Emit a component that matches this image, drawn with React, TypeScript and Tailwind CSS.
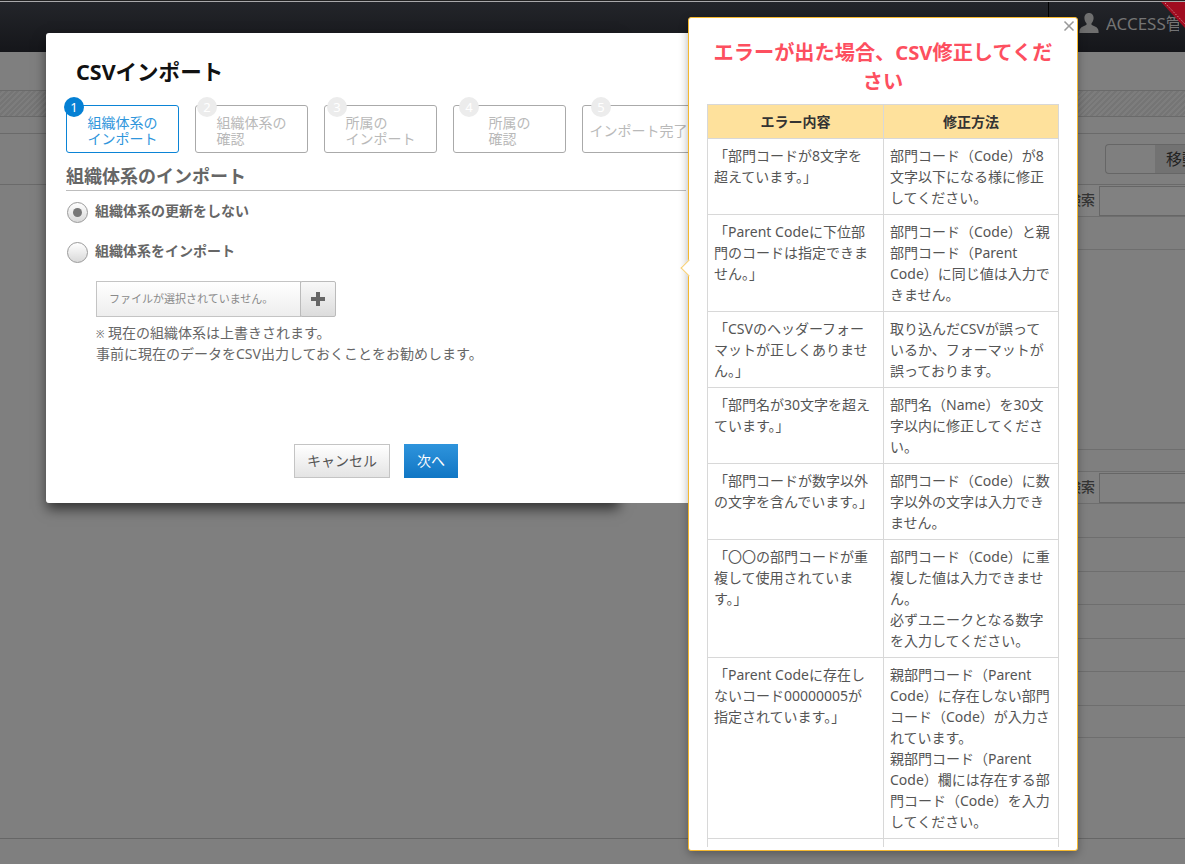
import { X } from "lucide-react";

const font = "font-['Noto_Sans','Noto_Sans_CJK_JP',sans-serif]";

const steps = [
  { n: 1, lines: ["組織体系の", "インポート"], active: true, badge: "-left-[3px]" },
  { n: 2, lines: ["組織体系の", "確認"], badge: "left-[1px]" },
  { n: 3, lines: ["所属の", "インポート"], badge: "left-[2px]" },
  { n: 4, lines: ["所属の", "確認"], badge: "left-[5px]" },
  { n: 5, lines: ["インポート完了"], badge: "left-[8px]" },
];

const rows: [string, string, string][] = [
  ["「部門コードが8文字を超えています。」", "部門コード（Code）が8文字以下になる様に修正してください。", "h-[76px]"],
  ["「Parent Codeに下位部門のコードは指定できません。」", "部門コード（Code）と親部門コード（Parent Code）に同じ値は入力できません。", "h-[97px]"],
  ["「CSVのヘッダーフォーマットが正しくありません。」", "取り込んだCSVが誤っているか、フォーマットが誤っております。", "h-[76px]"],
  ["「部門名が30文字を超えています。」", "部門名（Name）を30文字以内に修正してください。", "h-[76px]"],
  ["「部門コードが数字以外の文字を含んでいます。」", "部門コード（Code）に数字以外の文字は入力できません。", "h-[76px]"],
  ["「〇〇の部門コードが重複して使用されています。」", "部門コード（Code）に重複した値は入力できません。\n必ずユニークとなる数字を入力してください。", "h-[118px]"],
  ["「Parent Codeに存在しないコード00000005が指定されています。」", "親部門コード（Parent Code）に存在しない部門コード（Code）が入力されています。\n親部門コード（Parent Code）欄には存在する部門コード（Code）を入力してください。", "h-[181px]"],
];

const listRows = ["h-[34px]", "h-[34px]", "h-[33px]", "h-[34px]", "h-[33px]", "h-[34px]", "h-[32px]"];

const SearchRow = () => (
  <div className="flex h-[32px] items-center justify-end border-b border-[#6e6e6e] bg-[#818181]">
    <span className="mr-[4px] -mt-[2px] text-[14px] font-medium text-[#333333]">検索</span>
    <div className="h-[30px] w-[86px] border border-r-0 border-[#666666]" />
  </div>
);

const UserIcon = () => (
  <svg viewBox="0 0 20 20" className="h-[20px] w-[20px] fill-[#6f6f6f]">
    <path d="M10 0c-3 0-4.6 2.3-4.6 5 0 2.2.9 4 2.1 5.2v1.6C5.3 13 1.2 14 .6 17.2c-.2 1.1-.2 1.8-.2 2.8h19.2c0-1 0-1.7-.2-2.8-.6-3.2-4.7-4.2-6.9-5.4v-1.6c1.2-1.2 2.1-3 2.1-5.2 0-2.7-1.6-5-4.6-5z" />
  </svg>
);

const Ribbon = () => (
  <svg viewBox="0 0 24 26" className="absolute right-0 top-[2px] h-[26px] w-[24px]">
    <polygon points="0,0 24,0 24,26" fill="#a00c20" />
    <line x1="4" y1="1" x2="24" y2="22" stroke="#e8c0c4" strokeWidth="0.7" strokeDasharray="1.5 1.5" />
  </svg>
);

const PageBackground = () => (
  <div className="absolute inset-0 flex flex-col bg-[#7f7f7f]">
    <div className="relative h-[52px] shrink-0 bg-gradient-to-b from-[#24262b] to-[#15161a]">
      <div className="h-[1px] bg-[#222222]" />
      <div className="h-[1px] bg-[#a9a9ab]" />
      <div className="ml-auto flex h-[50px] w-[137px] border-l border-black pl-[30px] pt-[11px]">
        <UserIcon />
        <span className="ml-[7px] h-[26px] w-[73px] overflow-hidden whitespace-nowrap text-[17px] leading-[22px] text-[#747474]">ACCESS管理者</span>
      </div>
      <Ribbon />
    </div>
    <div className="h-[39px] shrink-0 border-b border-[#6a6a6a]" />
    <div className="h-[26px] shrink-0 border-b border-[#6a6a6a] bg-[repeating-linear-gradient(135deg,#757575_0px,#757575_2px,#7d7d7d_2px,#7d7d7d_4px)]" />
    <div className="h-[17px] shrink-0 border-b border-[#6a6a6a]" />
    <div className="flex h-[51px] shrink-0 justify-end border-b border-[#6a6a6a] pt-[10px]">
      <div className="flex h-[30px] w-[80px] overflow-hidden rounded-l-[4px] border border-r-0 border-[#666666]">
        <div className="w-[49px] shrink-0" />
        <div className="w-[31px] shrink-0 whitespace-nowrap bg-[#727272] pl-[11px] text-[16px] leading-[28px] text-[#222222]">移動</div>
      </div>
    </div>
    <div className="h-[654px] shrink-0 border-b border-[#666666]">
      <div className="ml-auto flex w-[300px] flex-col">
        <SearchRow />
        <div className="h-[33px] border-b border-[#6e6e6e]" />
        <div className="h-[200px] border-b border-[#6e6e6e]" />
        <div className="h-[22px] border-b border-[#6e6e6e]" />
        <SearchRow />
        {listRows.map((h, i) => (
          <div key={i} className={`${h} border-b border-[#6e6e6e]`} />
        ))}
      </div>
    </div>
  </div>
);

const StepBox = ({ n, lines, active, badge }: { n: number; lines: string[]; active?: boolean; badge: string }) => (
  <div className={`relative flex h-[48px] w-[113px] shrink-0 items-center justify-center rounded-[3px] border pt-[3px] text-[14px] leading-[16px] ${active ? "border-[#0b84d6] text-[#2f96dc]" : "border-[#aaaaaa] text-[#b9b9b9]"}`}>
    <div className={`absolute -top-[9px] flex h-5 w-5 items-center justify-center rounded-full text-[13px] ${badge} ${active ? "bg-[#0580d4] text-white" : "bg-[#ececec] text-white"}`}>{n}</div>
    <div className="whitespace-nowrap">
      {lines.map((l) => (
        <div key={l}>{l}</div>
      ))}
    </div>
  </div>
);

const Radio = ({ checked }: { checked?: boolean }) => (
  <div className="flex h-[21px] w-[21px] shrink-0 items-center justify-center rounded-full border border-[#9a9a9a] bg-gradient-to-b from-white to-[#d9d9d9]">
    {checked && <div className="h-[9px] w-[9px] rounded-full bg-[#777777]" />}
  </div>
);

const ImportDialog = () => (
  <>
    {/* shadow is narrower than the dialog in the screenshot */}
    <div className="absolute left-[47px] top-[33px] h-[470px] w-[572px] shadow-[0_6px_12px_rgba(0,0,0,0.6)]" />
    <div className="absolute left-[46px] top-[33px] h-[470px] w-[700px] rounded-[3px] bg-white pl-[20px]">
      <div className="pl-[10px] pt-[23px] text-[21.5px] font-bold leading-[32px] text-[#111111]">CSVインポート</div>
      <div className="mt-[17px] flex gap-[16px]">
        {steps.map((s) => (
          <StepBox key={s.n} {...s} />
        ))}
      </div>
      <div className="mt-[11px] h-[27px] w-[620px] border-b border-[#bdbdbd] text-[18px] font-bold leading-[24px] text-[#666666]">組織体系のインポート</div>
      <div className="ml-[1px] mt-[11px] flex items-center gap-[7px] text-[14px] font-bold text-[#666666]">
        <Radio checked />
        <span className="-mt-[5px]">組織体系の更新をしない</span>
      </div>
      <div className="ml-[1px] mt-[19px] flex items-center gap-[7px] text-[14px] font-bold text-[#666666]">
        <Radio />
        <span className="-mt-[5px]">組織体系をインポート</span>
      </div>
      <div className="ml-[30px] mt-[18px] flex h-[36px] w-[240px]">
        <div className="flex w-[205px] items-center border border-[#c4c4c4] bg-gradient-to-b from-[#ffffff] to-[#eeeeee] pl-[12px] text-[11px] text-[#8a8a8a]">ファイルが選択されていません。</div>
        <div className="flex w-[36px] -ml-[1px] items-center justify-center rounded-[2px] border border-[#bbbbbb] bg-gradient-to-b from-[#f8f8f8] to-[#dcdcdc]">
          <svg viewBox="0 0 14 14" className="h-[14px] w-[14px] fill-[#666666]">
            <rect x="5" y="0" width="4" height="14" />
            <rect x="0" y="5" width="14" height="4" />
          </svg>
        </div>
      </div>
      <div className="ml-[30px] mt-[6px] text-[14px] leading-[20px] text-[#666666]">
        <div><span className="text-[10px]">※</span> 現在の組織体系は上書きされます。</div>
        <div>事前に現在のデータをCSV出力しておくことをお勧めします。</div>
      </div>
      <div className="ml-[228px] mt-[80px] flex gap-[14px] text-[14px]">
        <div className="flex h-[34px] w-[96px] items-center justify-center border border-[#c4c4c4] bg-gradient-to-b from-white to-[#e4e4e4] pb-[2px] text-[#555555]">キャンセル</div>
        <div className="flex h-[34px] w-[54px] items-center justify-center bg-gradient-to-b from-[#2e94dc] to-[#0f76c4] pb-[2px] text-white">次へ</div>
      </div>
    </div>
  </>
);

const ErrorPopover = () => (
  <div className="absolute left-[688px] top-[17px] h-[834px] w-[390px] rounded-[3px] border border-[#f5b82e] bg-white shadow-[0_3px_10px_rgba(0,0,0,0.3)]">
    <div className="absolute -left-[6px] top-[244px] h-3 w-3 rotate-45 border-b border-l border-[#f8cf70] bg-white" />
    <X className="absolute right-0 top-0 h-[16px] w-[16px] text-[#999999]" strokeWidth={2.5} />
    <div className="h-[829px] overflow-hidden px-[18px] pt-[20px]">
      <div className="text-center text-[20.2px] font-bold leading-[29px] text-[#fd4f5f]">エラーが出た場合、CSV修正してください</div>
      <table className="mt-[8px] w-[351px] table-fixed border-collapse text-[14px] leading-[21px] text-[#555555]">
        <colgroup>
          <col className="w-[176px]" />
          <col className="w-[175px]" />
        </colgroup>
        <thead>
          <tr className="h-[34px] bg-[#fee19c] text-[#333333]">
            <th className="border border-[#d8d8d8] text-center text-[14px] font-bold">エラー内容</th>
            <th className="border border-[#d8d8d8] text-center text-[14px] font-bold">修正方法</th>
          </tr>
        </thead>
        <tbody>
          {rows.map(([a, b, h]) => (
            <tr key={a} className={h}>
              <td className="border border-[#d8d8d8] pb-0 pl-[6px] pr-[8px] pt-[6px] align-top">{a}</td>
              <td className="whitespace-pre-line border border-[#d8d8d8] px-[6px] pt-[6px] align-top">{b}</td>
            </tr>
          ))}
          <tr className="h-[20px]">
            <td className="border border-[#d8d8d8]" />
            <td className="border border-[#d8d8d8]" />
          </tr>
        </tbody>
      </table>
    </div>
  </div>
);

const App = () => {
  return (
    <div className={`relative h-[864px] w-[1185px] overflow-hidden ${font}`}>
      <PageBackground />
      <ImportDialog />
      <ErrorPopover />
    </div>
  );
};

export default App;
